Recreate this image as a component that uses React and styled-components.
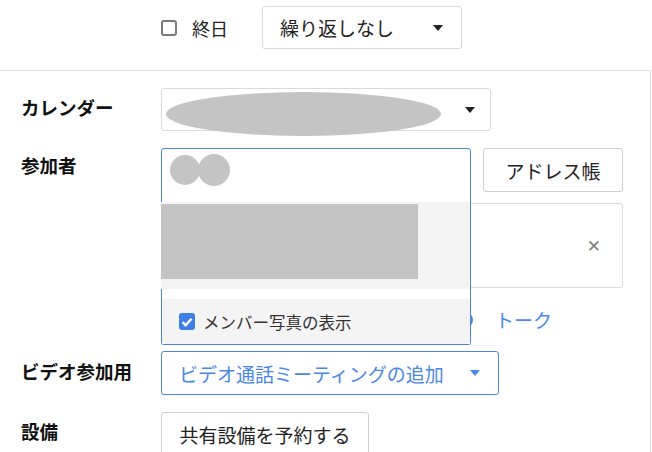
import React from 'react';
import styled, { createGlobalStyle } from 'styled-components';

const GlobalStyle = createGlobalStyle`
  html, body {
    margin: 0;
    background: #fff;
  }
  body {
    color: #222;
    font-family: "Noto Sans CJK JP", "Noto Sans", sans-serif;
  }
`;

const Page = styled.div`
  height: 452px;
  overflow: hidden;
  width: 652px;
`;

const TopBar = styled.div`
  align-items: flex-start;
  display: flex;
  height: 70px;
  padding: 6px 0 0 161px;
  box-sizing: border-box;
`;

const AllDay = styled.label`
  align-items: center;
  display: flex;
  font-size: 18px;
  gap: 15px;
  height: 43px;
  margin-right: 34px;
`;

const Box = styled.span`
  border: 2px solid #7a7a7a;
  border-radius: 3px;
  box-sizing: border-box;
  height: 16px;
  width: 16px;
`;

const Select = styled.div`
  align-items: center;
  background: #fff;
  border: 1px solid ${({ $active }) => ($active ? '#4a86e8' : '#dadada')};
  border-radius: 3px;
  box-sizing: border-box;
  color: ${({ $active }) => ($active ? '#4a86e8' : '#222')};
  display: flex;
  font-size: 19px;
  height: ${({ $height }) => $height || 43}px;
  justify-content: space-between;
  padding: 0 ${({ $right }) => $right || 18}px 0 17px;
  position: relative;
  width: ${({ $width }) => $width}px;
`;

const Caret = styled.span`
  border-left: 5px solid transparent;
  border-right: 5px solid transparent;
  border-top: 6px solid ${({ $blue }) => ($blue ? '#4a86e8' : '#222')};
  height: 0;
  width: 0;
`;

const Form = styled.div`
  border-right: 1px solid #e2e2e2;
  border-top: 1px solid #e2e2e2;
  box-sizing: border-box;
  display: flex;
  flex-direction: column;
  height: 382px;
  padding-top: 17px;
  width: 651px;
`;

const Row = styled.div`
  display: grid;
  grid-template-columns: 140px auto;
  margin-bottom: ${({ $gap }) => $gap || 0}px;
  padding-left: 21px;
`;

const Label = styled.div`
  color: #111;
  font-size: 18.5px;
  font-weight: 700;
  line-height: 24px;
  padding-top: ${({ $top }) => $top ?? 7}px;
`;

const Field = styled.div`
  display: flex;
  flex-direction: column;
`;

const Blob = styled.span`
  background: #c4c4c4;
  border-radius: 50%;
  height: 44px;
  left: 4px;
  position: absolute;
  top: 3px;
  width: 275px;
`;

const Inline = styled.div`
  align-items: flex-start;
  display: flex;
  gap: 12px;
`;

const Picker = styled.div`
  position: relative;
  width: 310px;
`;

const Input = styled.div`
  align-items: center;
  border: 1px solid #4a86e8;
  border-radius: 3px 3px 0 0;
  box-sizing: border-box;
  display: flex;
  height: 44px;
  padding-left: 8px;
`;

const Avatar = styled.span`
  background: #c4c4c4;
  border-radius: 50%;
  height: ${({ $size }) => $size}px;
  margin-left: ${({ $overlap }) => ($overlap ? -2 : 0)}px;
  width: ${({ $size }) => $size}px;
`;

const Menu = styled.div`
  background: #fff;
  border: 1px solid #4a86e8;
  border-radius: 0 0 3px 3px;
  border-top: 0;
  box-sizing: border-box;
  height: 154px;
  left: 0;
  padding-top: 11px;
  position: absolute;
  top: 43px;
  width: 310px;
  z-index: 2;
`;

const Suggestion = styled.div`
  background: #f4f4f4;
  box-sizing: border-box;
  height: 87px;
  margin-left: -1px;
  padding-top: 2px;
`;

const Redacted = styled.div`
  background: #c4c4c4;
  height: 75px;
  width: 257px;
`;

const MenuFooter = styled.label`
  align-items: center;
  background: #f4f4f4;
  color: #333;
  display: flex;
  font-size: 16.5px;
  gap: 8px;
  height: 45px;
  margin-top: 10px;
  padding-left: 17px;
`;

const Checked = styled.span`
  align-items: center;
  background: #3d7fe6;
  border-radius: 3px;
  display: flex;
  height: 17px;
  justify-content: center;
  width: 16px;
`;

const Button = styled.button`
  background: #fff;
  border: 1px solid #cfcfcf;
  border-radius: 3px;
  box-sizing: border-box;
  color: #222;
  font-family: inherit;
  font-size: 19px;
  height: ${({ $height }) => $height || 44}px;
  padding: 0;
  width: ${({ $width }) => $width}px;
`;

const Attendees = styled.div`
  align-items: center;
  border: 1px solid #dcdcdc;
  border-radius: 3px;
  box-sizing: border-box;
  display: flex;
  height: 85px;
  justify-content: flex-end;
  margin-top: 11px;
  padding-right: 21px;
  width: 462px;
`;

const Close = styled.span`
  color: #808080;
  font-family: "DejaVu Sans", sans-serif;
  font-size: 17px;
`;

const Links = styled.div`
  align-items: center;
  display: flex;
  gap: 22px;
  height: 63px;
  padding-left: 296px;
`;

const Dot = styled.span`
  border: 2px solid #4a86e8;
  border-radius: 50%;
  box-sizing: border-box;
  height: 16px;
  width: 16px;
`;

const Link = styled.a`
  color: #4a8af4;
  font-size: 19px;
`;

function App() {
  return (
    <Page>
      <GlobalStyle />
      <TopBar>
        <AllDay>
          <Box />
          終日
        </AllDay>
        <Select $width={200} $right={18}>
          繰り返しなし
          <Caret />
        </Select>
      </TopBar>
      <Form>
        <Row $gap={17}>
          <Label>カレンダー</Label>
          <Select $width={330} $right={15}>
            <Blob />
            <span />
            <Caret />
          </Select>
        </Row>
        <Row>
          <Label $top={5}>参加者</Label>
          <Field>
            <Inline>
              <Picker>
                <Input>
                  <Avatar $size={30} />
                  <Avatar $size={32} $overlap />
                </Input>
                <Menu>
                  <Suggestion>
                    <Redacted />
                  </Suggestion>
                  <MenuFooter>
                    <Checked>
                      <svg width="12" height="10" viewBox="0 0 12 10">
                        <path d="M1.5 5.2 4.6 8.2 10.5 1.8" fill="none" stroke="#fff" strokeWidth="2.4" />
                      </svg>
                    </Checked>
                    メンバー写真の表示
                  </MenuFooter>
                </Menu>
              </Picker>
              <Button $width={140}>アドレス帳</Button>
            </Inline>
            <Attendees>
              <Close>✕</Close>
            </Attendees>
            <Links>
              <Dot />
              <Link>トーク</Link>
            </Links>
          </Field>
        </Row>
        <Row $gap={17}>
          <Label $top={8}>ビデオ参加用</Label>
          <Select $width={338} $active $right={18} $height={44}>
            ビデオ通話ミーティングの追加
            <Caret $blue />
          </Select>
        </Row>
        <Row>
          <Label $top={7}>設備</Label>
          <Button $width={208}>共有設備を予約する</Button>
        </Row>
      </Form>
    </Page>
  );
}

export default App;
